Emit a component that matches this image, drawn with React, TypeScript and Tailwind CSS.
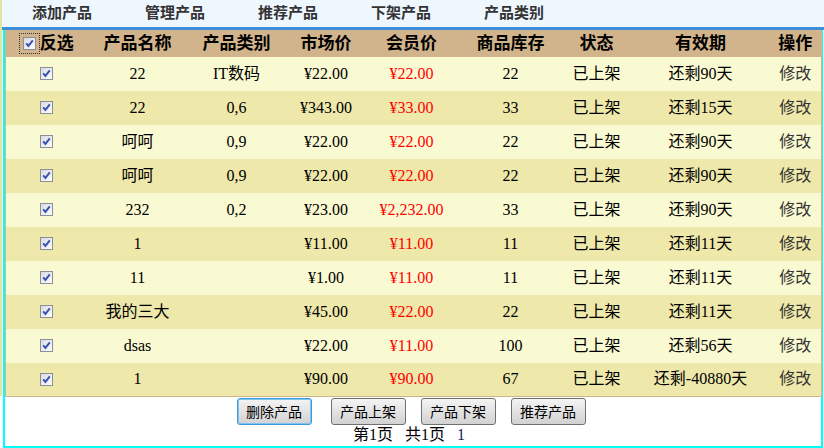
import { useId } from "react";

const rows = [
  { name: "22", cat: "IT数码", market: "¥22.00", member: "¥22.00", stock: "22", left: "还剩90天" },
  { name: "22", cat: "0,6", market: "¥343.00", member: "¥33.00", stock: "33", left: "还剩15天" },
  { name: "呵呵", cat: "0,9", market: "¥22.00", member: "¥22.00", stock: "22", left: "还剩90天" },
  { name: "呵呵", cat: "0,9", market: "¥22.00", member: "¥22.00", stock: "22", left: "还剩90天" },
  { name: "232", cat: "0,2", market: "¥23.00", member: "¥2,232.00", stock: "33", left: "还剩90天" },
  { name: "1", cat: "", market: "¥11.00", member: "¥11.00", stock: "11", left: "还剩11天" },
  { name: "11", cat: "", market: "¥1.00", member: "¥11.00", stock: "11", left: "还剩11天" },
  { name: "我的三大", cat: "", market: "¥45.00", member: "¥22.00", stock: "22", left: "还剩11天" },
  { name: "dsas", cat: "", market: "¥22.00", member: "¥11.00", stock: "100", left: "还剩56天" },
  { name: "1", cat: "", market: "¥90.00", member: "¥90.00", stock: "67", left: "还剩-40880天" },
];

const tabs = ["添加产品", "管理产品", "推荐产品", "下架产品", "产品类别"];

const serif = "font-['Liberation_Serif','Noto_Sans_CJK_SC',serif]";
const sans = "font-['Noto_Sans_CJK_SC','Liberation_Sans',sans-serif]";

// old xp-style checked box
function Check() {
  const id = useId();
  return (
    <svg width="13" height="13" viewBox="0 0 13 13" className="block">
      <defs>
        <linearGradient id={id} x1="0" y1="0" x2="1" y2="1">
          <stop offset="0" stopColor="#d6d8e4" />
          <stop offset="1" stopColor="#ffffff" />
        </linearGradient>
      </defs>
      <rect x="0.5" y="0.5" width="12" height="12" fill={`url(#${id})`} stroke="#8e8f94" />
      <path d="M3.2 6.4 L5.4 8.9 L9.8 3.4" fill="none" stroke="#3a4fae" strokeWidth="1.9" />
    </svg>
  );
}

function Btn({ label, focused }: { label: string; focused?: boolean }) {
  return (
    <button
      className={`h-[27px] w-[75px] rounded-[3px] border bg-gradient-to-b from-[#f4f4f4] to-[#d2d2d2] text-[14px] text-black ${sans} ${
        focused ? "border-[#3c9ad8] shadow-[inset_0_0_0_1px_#7fc3ee]" : "border-[#707070]"
      }`}
    >
      {label}
    </button>
  );
}

export default function App() {
  return (
    <div className="relative h-[448px] w-[824px] overflow-hidden bg-white">
      <div className="absolute left-0 top-0 h-[396px] w-[2px] bg-[#dfe6a0]" />
      <nav className="flex h-[30px] items-center border-b-[3px] border-[#3f8fd8] bg-[#eef6fe] pb-[2px] pl-[32px]">
        {tabs.map((t) => (
          <span key={t} className={`w-[113px] text-[15px] font-bold text-[#333] ${sans}`}>
            {t}
          </span>
        ))}
      </nav>

      <div className="ml-[3px] mr-[1px] flex h-[418px] flex-col border-x-2 border-b-2 border-[#00ffff]">
        <table className={`w-[816px] table-fixed border-collapse border border-[#d2b48c] text-[16px] text-black ${serif}`}>
          <colgroup>
            <col className="w-[80px]" />
            <col className="w-[104px]" />
            <col className="w-[94px]" />
            <col className="w-[85px]" />
            <col className="w-[86px]" />
            <col className="w-[112px]" />
            <col className="w-[60px]" />
            <col className="w-[148px]" />
            <col className="w-[47px]" />
          </colgroup>
          <thead>
            <tr className="h-[26px] bg-[#d2b48c] text-[17px] font-bold">
              <th className="p-0">
                <div className="flex items-center justify-center pl-[1px]">
                  <span className="border border-dotted border-[#333] p-[3px]">
                    <Check />
                  </span>
                  <span>反选</span>
                </div>
              </th>
              <th className="p-0">产品名称</th>
              <th className="p-0">产品类别</th>
              <th className="p-0">市场价</th>
              <th className="p-0">会员价</th>
              <th className="p-0">商品库存</th>
              <th className="p-0">状态</th>
              <th className="p-0">有效期</th>
              <th className="p-0 pr-[5px]">操作</th>
            </tr>
          </thead>
          <tbody>
            {rows.map((r, i) => (
              <tr key={i} className={`h-[34px] text-center ${i % 2 === 0 ? "bg-[#fafad2]" : "bg-[#eee8aa]"}`}>
                <td className="p-0">
                  <div className="flex justify-center pl-[2px]">
                    <Check />
                  </div>
                </td>
                <td className="p-0">{r.name}</td>
                <td className="p-0">{r.cat}</td>
                <td className="p-0 whitespace-nowrap">{r.market}</td>
                <td className="p-0 whitespace-nowrap text-[#ff0000]">{r.member}</td>
                <td className="p-0">{r.stock}</td>
                <td className="p-0">已上架</td>
                <td className="p-0 whitespace-nowrap">{r.left}</td>
                <td className="p-0 pr-[5px] text-[#333]">修改</td>
              </tr>
            ))}
          </tbody>
        </table>

        <div className="mt-[1px] flex justify-center pr-[4px]">
          <Btn label="删除产品" focused />
          <span className="ml-[19px]">
            <Btn label="产品上架" />
          </span>
          <span className="ml-[15px]">
            <Btn label="产品下架" />
          </span>
          <span className="ml-[15px]">
            <Btn label="推荐产品" />
          </span>
        </div>

        <div className={`mt-[1px] pr-[8px] text-center text-[16px] leading-[18px] text-black ${serif}`}>
          第1页&nbsp;&nbsp;&nbsp;共1页&nbsp;&nbsp;&nbsp;<span className="text-[#1a1a5a]">1</span>
        </div>
      </div>
    </div>
  );
}
